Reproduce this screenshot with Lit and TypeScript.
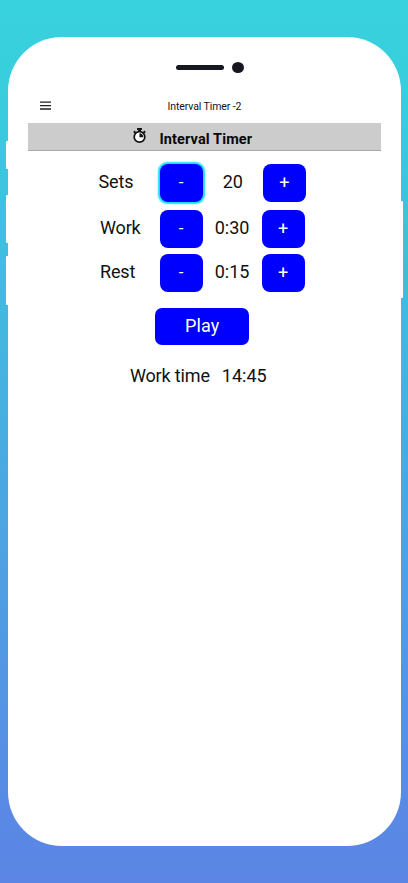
import { LitElement, html, css } from "lit";
import { customElement, property } from "lit/decorators.js";
import { classMap } from "lit/directives/class-map.js";

@customElement("stepper-row")
class StepperRow extends LitElement {
  @property() label = "";
  @property() value = "";
  @property({ type: Boolean }) active = false;

  static styles = css`
    :host { display: block; height: 38px; }
    .row { display: grid; align-items: center; height: 38px; margin-left: 72.4px; grid-template-columns: 59.6px 43px 59px 43px; }
    .row.first { grid-template-columns: 59.6px 43px 60.4px 43px; }
    .label { font-size: 18px; line-height: 36px; height: 38px; color: #111; letter-spacing: -0.16px; }
    .first .label { margin-left: -1.5px; }
    .value { font-size: 18px; line-height: 36px; height: 38px; text-align: center; color: #111; }
    button { box-sizing: border-box; display: block; width: 43px; height: 38px; margin: 0; padding: 0 0 2px; border: 0; border-radius: 8px; background: #0000fe; color: #fff; font: 18px/36px Roboto, sans-serif; }
    .minus { font-size: 17px; }
    .plus { padding: 0; }
    .active { box-shadow: 0 0 1.5px 1.3px #10dfff; }
  `;

  render() {
    return html`<div class=${classMap({ row: true, first: this.active })}>
      <span class="label">${this.label}</span>
      <button class=${classMap({ minus: true, active: this.active })}>-</button>
      <span class="value">${this.value}</span>
      <button class="plus">+</button>
    </div>`;
  }
}

@customElement("app-root")
class AppRoot extends LitElement {
  static styles = css`
    :host { display: block; height: 883px; box-sizing: border-box; padding: 37px 7.5px 37px 7.6px; overflow: hidden; font-family: Roboto, sans-serif; background: linear-gradient(#38d1de, #38cfdd 8%, #5a88e5 94%, #5b86e5); }
    .phone { position: relative; height: 809px; border-radius: 54px; background: #fff; box-sizing: border-box; padding: 24.5px 20px 0; }
    .key { position: absolute; width: 4px; background: #fff; }
    .left { left: -2px; border-radius: 1px 0 0 1px; }
    .right { right: -2px; border-radius: 0 1px 1px 0; }
    .k1 { top: 104px; height: 28px; }
    .k2 { top: 158px; height: 48px; }
    .k3 { top: 219px; height: 49px; }
    .k4 { top: 164px; height: 97px; }
    .speaker { display: flex; align-items: center; gap: 7.5px; height: 12px; padding-left: 148.8px; }
    .slot { width: 48px; height: 5.5px; border-radius: 3px; background: #17171f; }
    .camera { width: 12px; height: 11px; border-radius: 50%; background: #17171f; }
    .bar { display: flex; align-items: center; height: 49.9px; padding-left: 12.4px; }
    .menu { width: 11px; height: 9px; padding-top: 14px; }
    .name { margin-left: 116.5px; padding-top: 17px; font-size: 10.5px; line-height: 14px; letter-spacing: -.1px; color: #151515; white-space: nowrap; }
    .title { display: flex; box-sizing: border-box; height: 27.6px; background: #ccc; border-bottom: 1px solid #aaa; padding-left: 104.3px; }
    .watch { width: 15px; height: 18px; margin-top: 3.6px; }
    .title h1 { margin: 8px 0 0 12.5px; font-size: 14.5px; line-height: 18px; letter-spacing: .12px; color: #080808; white-space: nowrap; }
    .rows { padding-top: 13px; }
    .work { margin-top: 8px; }
    .rest { margin-top: 6px; }
    .play { display: block; width: 94.5px; height: 37px; margin: 16px 0 0 127.4px; padding: 0 0 1px; border: 0; border-radius: 7px; background: #0000fe; color: #fff; font: 18px/36px Roboto, sans-serif; letter-spacing: .2px; }
    .total { display: flex; gap: 12px; margin: 19.5px 0 0 102.3px; font-size: 18px; line-height: 24px; color: #111; white-space: nowrap; }
    .caption { letter-spacing: -.15px; }
  `;

  render() {
    return html`<main class="phone">
      <i class="key left k1"></i><i class="key left k2"></i><i class="key left k3"></i><i class="key right k4"></i>
      <div class="speaker"><span class="slot"></span><span class="camera"></span></div>
      <header class="bar">
        <svg class="menu" viewBox="0 0 11 9"><path d="M0 1.2H11M0 4.6H11M0 8H11" stroke="#222" stroke-width="1.3"/></svg>
        <span class="name">Interval Timer -2</span>
      </header>
      <div class="title">
        <svg class="watch" viewBox="0 0 15 18">
          <circle cx="7.5" cy="9.9" r="5.3" fill="#fff" stroke="#111" stroke-width="1.7"/>
          <path d="M5.1 .9h4.8v2H8.9v1.8H6.1V2.9h-1z" fill="#111"/>
          <path d="M1.9 4.3l1.6 1.6M13.1 4.3l-1.6 1.6" stroke="#111" stroke-width="2"/>
          <path d="M7.5 6.2v4h3.8A3.8 3.8 0 0 0 7.5 6.2z" fill="#111"/>
        </svg>
        <h1>Interval Timer</h1>
      </div>
      <section class="rows">
        <stepper-row label="Sets" value="20" active></stepper-row>
        <stepper-row class="work" label="Work" value="0:30"></stepper-row>
        <stepper-row class="rest" label="Rest" value="0:15"></stepper-row>
      </section>
      <button class="play">Play</button>
      <div class="total"><span class="caption">Work time</span><span>14:45</span></div>
    </main>`;
  }
}
